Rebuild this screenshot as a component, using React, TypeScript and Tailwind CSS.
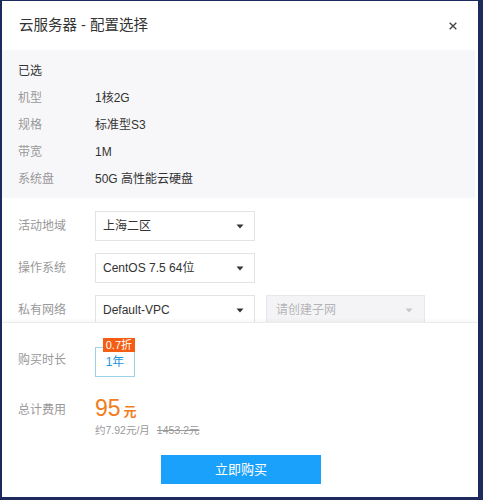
const FONT = { fontFamily: '"Liberation Sans", "Noto Sans CJK SC", sans-serif' };

const SELECTED = [
  { label: "机型", value: "1核2G" },
  { label: "规格", value: "标准型S3" },
  { label: "带宽", value: "1M" },
  { label: "系统盘", value: "50G 高性能云硬盘" },
];

function Caret({ light }: { light?: boolean }) {
  return (
    <svg width="8" height="5" viewBox="0 0 8 5" className="shrink-0">
      <path d="M0.5 0.5 L7.5 0.5 L4 4.5 Z" fill={light ? "#c8c8cc" : "#333"} />
    </svg>
  );
}

function Select({ value, disabled }: { value: string; disabled?: boolean }) {
  return (
    <div
      className={
        disabled
          ? "flex h-[30px] w-[159px] items-center justify-between border border-[#e8e8ec] bg-[#f4f4f6] pl-[9px] pr-[11px] text-[12px] text-[#b4b4b8]"
          : "flex h-[30px] w-[160px] items-center justify-between border border-[#e3e3e6] bg-white pl-[7px] pr-[10px] text-[12px] text-[#333]"
      }
    >
      <span>{value}</span>
      <Caret light={disabled} />
    </div>
  );
}

function FormRow({ label, children }: { label: string; children: React.ReactNode }) {
  return (
    <div className="flex items-center">
      <span className="w-[77px] text-[12px] text-[#999]">{label}</span>
      {children}
    </div>
  );
}

export default function App() {
  return (
    <div className="h-[500px] w-[483px] bg-[#1d2b5c] pl-[2px] pr-[5px] pt-[1px] pb-[3px]" style={FONT}>
      <div className="flex h-full flex-col bg-white">
        {/* header */}
        <div className="flex h-[49px] shrink-0 items-center justify-between pl-[17px] pr-[21px]">
          <h1 className="text-[14.5px] text-[#333]">云服务器 - 配置选择</h1>
          <svg width="8" height="8" viewBox="0 0 8 8">
            <path d="M0.7 0.7 L7.3 7.3 M7.3 0.7 L0.7 7.3" stroke="#444" strokeWidth="1.4" />
          </svg>
        </div>

        {/* scroll body */}
        <div className="h-[272px] shrink-0 overflow-hidden">
          <div className="mr-[3px] bg-[#f7f7f9] pl-[16px] pt-[7px] pb-[6px]">
            <div className="flex h-[27px] items-center text-[12px] text-[#333]">已选</div>
            {SELECTED.map((r) => (
              <div key={r.label} className="flex h-[27px] items-center text-[12px]">
                <span className="w-[77px] text-[#999]">{r.label}</span>
                <span className="text-[#333]">{r.value}</span>
              </div>
            ))}
          </div>

          <div className="flex flex-col gap-[12px] pl-[16px] pt-[13px]">
            <FormRow label="活动地域">
              <Select value="上海二区" />
            </FormRow>
            <FormRow label="操作系统">
              <Select value="CentOS 7.5 64位" />
            </FormRow>
            <FormRow label="私有网络">
              <Select value="Default-VPC" />
              <div className="ml-[11px]">
                <Select value="请创建子网" disabled />
              </div>
            </FormRow>
          </div>
        </div>

        {/* footer */}
        <div className="flex flex-1 flex-col border-t border-[#ececef] pl-[16px] shadow-[0_-2px_4px_rgba(0,0,0,0.03)]">
          <div className="mt-[24px] flex items-center">
            <span className="w-[77px] -translate-y-[2px] text-[12px] text-[#999]">购买时长</span>
            <div className="relative flex h-[30px] w-[40px] items-center justify-center border border-[#9fd0ea] bg-white">
              <span className="text-[12px] text-[#1e96dc]">1年</span>
              <span className="absolute -top-[10px] -right-[1px] whitespace-nowrap bg-[#f55d12] px-[3px] text-[11px] leading-[14px] text-white">
                0.7折
              </span>
            </div>
          </div>

          <div className="mt-[16px] flex">
            <span className="w-[77px] pt-[8px] text-[12px] text-[#999]">总计费用</span>
            <div className="flex flex-col">
              <div className="flex items-baseline text-[#f07e1e]">
                <span className="text-[23px] leading-[30px]">95</span>
                <span className="ml-[3px] text-[13px] font-bold">元</span>
              </div>
              <div className="text-[10.5px] text-[#999]">
                约7.92元/月<span className="ml-[7px] line-through">1453.2元</span>
              </div>
            </div>
          </div>

          <div className="mt-[16px] flex">
            <button className="ml-[143px] h-[29px] w-[160px] bg-[#1aa1fb] text-[13px] text-white">立即购买</button>
          </div>
        </div>
      </div>
    </div>
  );
}
